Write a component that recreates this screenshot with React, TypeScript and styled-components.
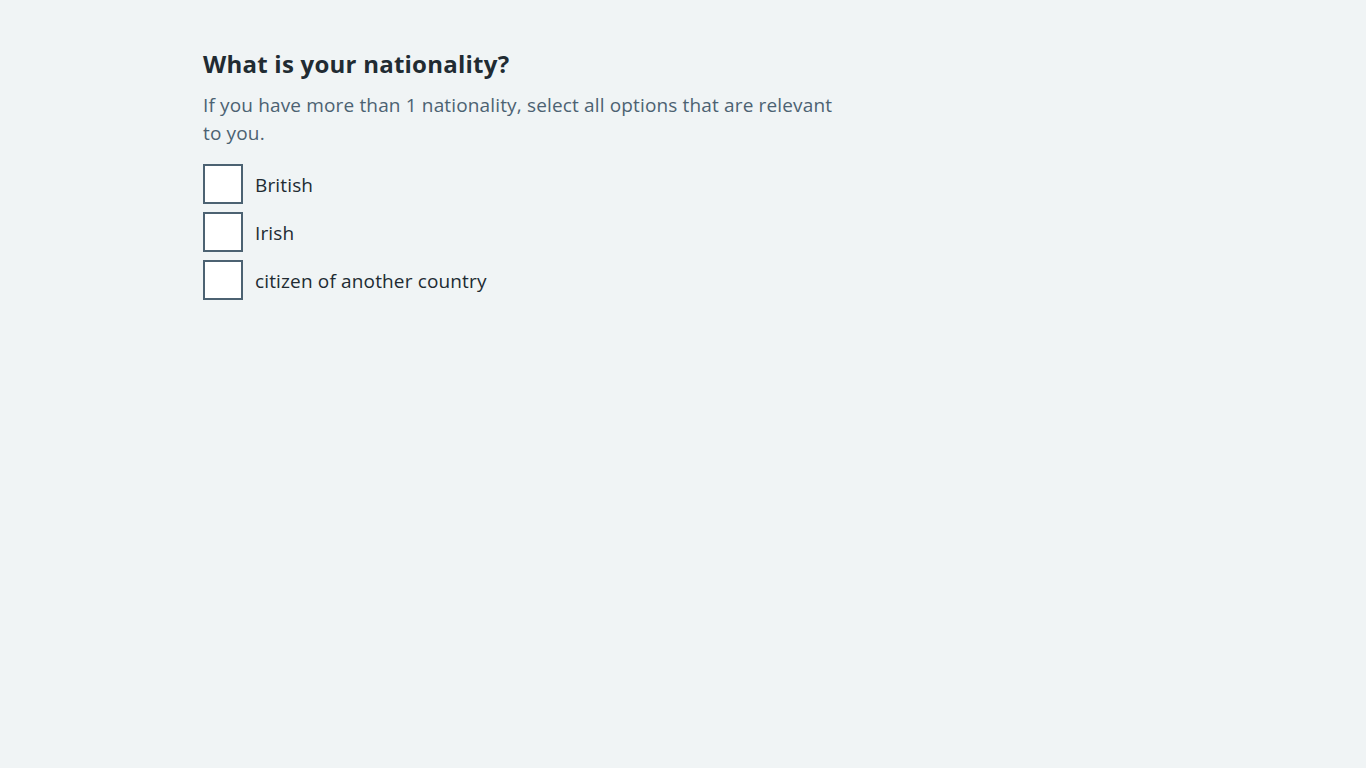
import styled, { createGlobalStyle } from "styled-components";

const GlobalStyle = createGlobalStyle`
  html, body {
    margin: 0;
    padding: 0;
    background: #f0f4f5;
  }
  body {
    font-family: "Open Sans", "Noto Sans", Arial, sans-serif;
    color: #212b32;
  }
`;

const Page = styled.main`
  min-height: 768px;
  box-sizing: border-box;
  padding-top: 48px;
`;

const WidthContainer = styled.div`
  max-width: 960px;
  margin: 0 auto;
`;

const Column = styled.div`
  width: 640px;
`;

const Fieldset = styled.fieldset`
  margin: 0;
  padding: 0;
  border: 0;
  min-width: 0;
`;

const Legend = styled.legend`
  padding: 0;
  margin: 0 0 11px;
  font-size: 24px;
  line-height: 32px;
  font-weight: 700;
  letter-spacing: 0.24px;
  color: #212b32;
`;

const Hint = styled.div`
  font-size: 19px;
  line-height: 28px;
  letter-spacing: 0.15px;
  color: #4c6272;
  margin-bottom: 17px;
`;

const Checkboxes = styled.div`
  display: flex;
  flex-direction: column;
  gap: 8px;
`;

const Item = styled.div`
  display: flex;
  align-items: flex-start;
  min-height: 40px;
`;

const Box = styled.input.attrs({ type: "checkbox" })`
  appearance: none;
  margin: 0;
  width: 40px;
  height: 40px;
  box-sizing: border-box;
  border: 2px solid #4c6272;
  background: #ffffff;
  flex: none;
`;

const Label = styled.label`
  padding: 7px 12px 5px;
  font-size: 19px;
  line-height: 28px;
  letter-spacing: 0.15px;
  color: #212b32;
`;

const options = [
  { id: "british", text: "British" },
  { id: "irish", text: "Irish" },
  { id: "other", text: "citizen of another country" },
];

export default function App() {
  return (
    <>
      <GlobalStyle />
      <Page>
        <WidthContainer>
          <Column>
            <Fieldset>
              <Legend>What is your nationality?</Legend>
              <Hint>
                If you have more than 1 nationality, select all options that are relevant to you.
              </Hint>
              <Checkboxes>
                {options.map((o) => (
                  <Item key={o.id}>
                    <Box id={o.id} />
                    <Label htmlFor={o.id}>{o.text}</Label>
                  </Item>
                ))}
              </Checkboxes>
            </Fieldset>
          </Column>
        </WidthContainer>
      </Page>
    </>
  );
}
